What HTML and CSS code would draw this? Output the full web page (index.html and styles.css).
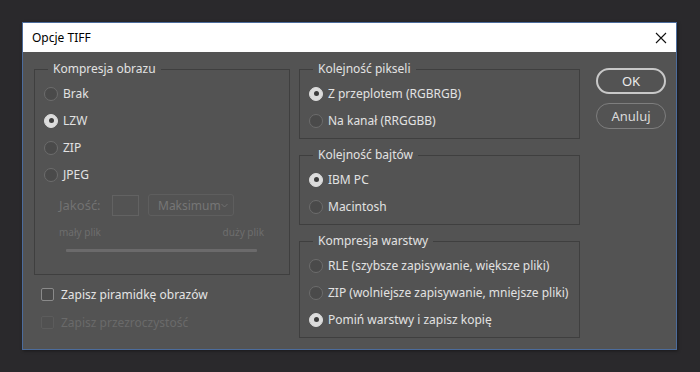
FILE: index.html
```html
<!DOCTYPE html>
<html lang="pl">
<head>
  <meta charset="UTF-8">
  <meta name="viewport" content="width=device-width, initial-scale=1.0">
  <title>Opcje TIFF</title>
  <link rel="stylesheet" href="styles.css">
</head>
<body>
  <div class="dialog">
    <div class="titlebar">
      <span class="title">Opcje TIFF</span>
      <svg class="close" width="12" height="12" viewBox="0 0 12 12">
        <path d="M1 1 L11 11 M11 1 L1 11" stroke="#111" stroke-width="1.1" fill="none"/>
      </svg>
    </div>

    <div class="dialog-body">
      <!-- left column: image compression -->
      <div class="col-left">
        <div class="group group-image">
          <div class="group-title">Kompresja obrazu</div>
          <div class="radio"><span class="dot"></span>Brak</div>
          <div class="radio"><span class="dot on"></span>LZW</div>
          <div class="radio"><span class="dot"></span>ZIP</div>
          <div class="radio"><span class="dot"></span>JPEG</div>

          <div class="quality">
            <span class="quality-label">Jakość:</span>
            <span class="quality-input"></span>
            <span class="quality-select">Maksimum
              <svg width="7" height="5" viewBox="0 0 7 5"><path d="M0.5 1 L3.5 4 L6.5 1" stroke="#707070" fill="none"/></svg>
            </span>
          </div>
          <div class="size-labels"><span>mały plik</span><span>duży plik</span></div>
          <div class="slider"></div>
        </div>

        <div class="checks">
          <div class="check"><span class="box"></span>Zapisz piramidkę obrazów</div>
          <div class="check disabled"><span class="box"></span>Zapisz przezroczystość</div>
        </div>
      </div>

      <!-- middle column -->
      <div class="col-mid">
        <div class="group">
          <div class="group-title">Kolejność pikseli</div>
          <div class="radio"><span class="dot on"></span>Z przeplotem (RGBRGB)</div>
          <div class="radio"><span class="dot"></span>Na kanał (RRGGBB)</div>
        </div>
        <div class="group">
          <div class="group-title">Kolejność bajtów</div>
          <div class="radio"><span class="dot on"></span>IBM PC</div>
          <div class="radio"><span class="dot"></span>Macintosh</div>
        </div>
        <div class="group">
          <div class="group-title">Kompresja warstwy</div>
          <div class="radio"><span class="dot"></span>RLE (szybsze zapisywanie, większe pliki)</div>
          <div class="radio"><span class="dot"></span>ZIP (wolniejsze zapisywanie, mniejsze pliki)</div>
          <div class="radio"><span class="dot on"></span>Pomiń warstwy i zapisz kopię</div>
        </div>
      </div>

      <!-- buttons -->
      <div class="col-buttons">
        <button class="btn btn-primary">OK</button>
        <button class="btn">Anuluj</button>
      </div>
    </div>
  </div>
</body>
</html>
```

FILE: styles.css
```css
body {
  margin: 0;
  padding: 22px;
  background-color: #2a292c;
  font-family: "Noto Sans", "Open Sans", sans-serif;
  font-size: 12px;
}
.dialog {
  width: 655px;
  height: 328px;
  box-sizing: border-box;
  border: 1px solid #4c6c9c;
  background: #535353;
  box-shadow: 1px 1px 3px rgba(0, 0, 0, 0.4);
}
.titlebar {
  height: 29px;
  background: #fff;
  display: flex;
  align-items: center;
  justify-content: space-between;
  padding: 0 9px 0 9px;
}
.title {
  color: #000;
  font-size: 12px;
}
.dialog-body {
  display: flex;
  padding: 17px 10px 0 11px;
}
.col-left {
  width: 256px;
}
.col-mid {
  width: 281px;
  margin-left: 9px;
  display: flex;
  flex-direction: column;
  gap: 16px;
}
.col-buttons {
  margin-left: 16px;
  display: flex;
  flex-direction: column;
  gap: 9px;
  margin-top: -1px;
}
.group {
  border: 1px solid #3f3f3f;
  padding: 0 0 4px 9px;
  color: #e2e2e2;
}
.group-title {
  width: fit-content;
  line-height: 16px;
  margin: -9px 0 3px 4px;
  padding: 0 5px;
  background: #535353;
  color: #e2e2e2;
}
.radio {
  display: flex;
  align-items: center;
  height: 27px;
  gap: 5px;
}
.dot {
  width: 14px;
  height: 14px;
  box-sizing: border-box;
  border-radius: 50%;
  border: 1px solid #6c6c6c;
  background: #4a4a4a;
  display: flex;
  align-items: center;
  justify-content: center;
}
.dot.on {
  background: #dcdcdc;
  border-color: #dcdcdc;
}
.dot.on::after {
  content: "";
  width: 5px;
  height: 5px;
  border-radius: 50%;
  background: #3c3c3c;
}
.group-image {
  padding-bottom: 22px;
}
.quality {
  display: flex;
  align-items: center;
  margin: 6px 0 0 15px;
  color: #727272;
  font-size: 13px;
}
.quality-label {
  width: 53px;
}
.quality-input {
  width: 27px;
  height: 21px;
  box-sizing: border-box;
  border: 1px solid #626262;
}
.quality-select {
  margin-left: 9px;
  width: 86px;
  height: 22px;
  box-sizing: border-box;
  border: 1px solid #5e5e5e;
  border-radius: 3px;
  display: flex;
  align-items: center;
  justify-content: space-between;
  padding: 0 5px 0 9px;
  color: #767676;
  font-size: 12px;
}
.size-labels {
  display: flex;
  justify-content: space-between;
  width: 205px;
  margin: 9px 0 0 15px;
  font-size: 10px;
  line-height: 14px;
  color: #6e6e6e;
}
.slider {
  width: 191px;
  height: 3px;
  margin: 10px 0 0 22px;
  background: #6b6a6b;
  border-radius: 1px;
}
.checks {
  margin-top: 5px;
}
.check {
  display: flex;
  align-items: center;
  height: 28px;
  gap: 7px;
  padding-left: 7px;
  color: #e4e4e4;
  font-size: 12px;
}
.box {
  width: 13px;
  height: 13px;
  box-sizing: border-box;
  border: 1px solid #8a8a8a;
  border-radius: 2px;
  background: #4b4b4b;
}
.check.disabled {
  color: #6a6a6a;
}
.check.disabled .box {
  border-color: #5c5c5c;
  background: #515151;
}
.btn {
  width: 70px;
  height: 26px;
  border-radius: 13px;
  border: 1px solid #7e7e7e;
  background: transparent;
  color: #dadada;
  font-family: "Noto Sans", "Open Sans", sans-serif;
  font-size: 13px;
  padding: 0;
}
.btn-primary {
  border: 2px solid #c8c8c8;
  color: #ececec;
}
```
